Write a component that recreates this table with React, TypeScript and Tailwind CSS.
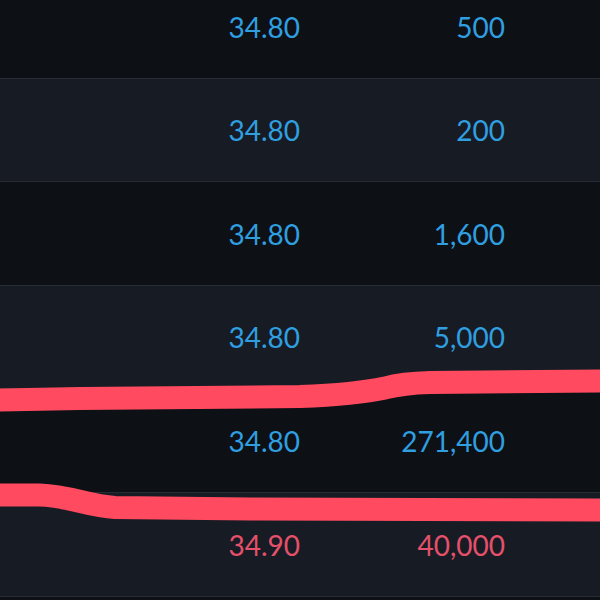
const rows = [
  { price: "34.80", qty: "500", side: "buy", h: "h-[104px]", bg: "bg-[#0d1015]" },
  { price: "34.80", qty: "200", side: "buy", h: "h-[103px]", bg: "bg-[#171b24]" },
  { price: "34.80", qty: "1,600", side: "buy", h: "h-[104px]", bg: "bg-[#0d1015]" },
  { price: "34.80", qty: "5,000", side: "buy", h: "h-[103px]", bg: "bg-[#171b24]" },
  { price: "34.80", qty: "271,400", side: "buy", h: "h-[104px]", bg: "bg-[#0d1015]" },
  { price: "34.90", qty: "40,000", side: "sell", h: "h-[104px]", bg: "bg-[#171b24]" },
  { price: "", qty: "", side: "buy", h: "h-[104px]", bg: "bg-[#0d1015]" },
];

export default function App() {
  return (
    <div className="relative w-[600px] h-[600px] overflow-hidden bg-[#0d1015] font-['Lato',sans-serif]">
      <div className="-mt-[25px] flex flex-col">
        {rows.map((r, i) => (
          <div
            key={i}
            className={`${r.h} ${r.bg} flex items-center border-b border-[#272b33] text-[28px] ${
              r.side === "sell" ? "text-[#e5506a]" : "text-[#2f9fe0]"
            }`}
          >
            <span className="w-[300px] text-right">{r.price}</span>
            <span className="w-[205px] text-right">{r.qty}</span>
          </div>
        ))}
      </div>

      {/* hand-drawn annotation strokes */}
      <svg className="absolute inset-0" width="600" height="600" viewBox="0 0 600 600">
        <path
          d="M -5 400 L 80 398.5 L 300 396.5 C 340 395 362 393 385 388 C 400 384 412 383 430 382.5 L 605 381"
          fill="none"
          stroke="#ff4a5f"
          strokeWidth="23"
        />
        <path
          d="M -5 495 L 40 495 C 70 496 88 506 115 507.5 L 250 509 L 605 510"
          fill="none"
          stroke="#ff4a5f"
          strokeWidth="23"
        />
      </svg>
    </div>
  );
}
